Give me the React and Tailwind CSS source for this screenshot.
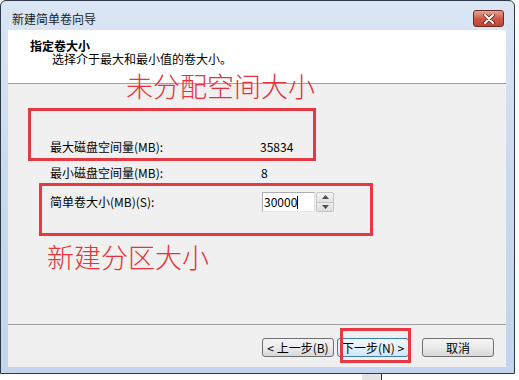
export default function App() {
  return (
    <div className="relative w-[519px] h-[380px] overflow-hidden bg-white text-[12px] text-black font-['Noto_Sans_CJK_SC','Noto_Sans',sans-serif]">
      {/* window */}
      <div className="w-[515px] h-[374px] flex flex-col rounded-t-[6px] border border-[#2e3a4a] bg-gradient-to-b from-[#dbe6f4] via-[#c9d9ee] to-[#c2d5ec] pl-[7px] pr-[8px] pb-[6px]">
        {/* title bar */}
        <div className="h-[29px] flex items-start">
          <span className="mt-[11px] ml-[4px] leading-[14px] text-[#1b1b1b]">新建简单卷向导</span>
          <button className="ml-auto mt-[9px] mr-[2px] w-[31px] h-[17px] flex items-center justify-center rounded-[3px] border border-[#6e2a22] bg-gradient-to-b from-[#e6a496] via-[#cf5a47] to-[#bd4533]">
            <svg width="12" height="10" viewBox="0 0 12 10">
              <path d="M2 1 L10 9 M10 1 L2 9" stroke="#5a1d14" strokeWidth="3.4" strokeLinecap="round" />
              <path d="M2 1 L10 9 M10 1 L2 9" stroke="#ffffff" strokeWidth="2" strokeLinecap="round" />
            </svg>
          </button>
        </div>

        {/* content */}
        <div className="flex-1 flex flex-col bg-[#f0f0f0]">
          <div className="h-[53px] bg-white pt-[9px] pl-[22px] leading-[13px]">
            <div className="font-bold">指定卷大小</div>
            <div className="pl-[22px]">选择介于最大和最小值的卷大小。</div>
          </div>
          <div className="h-px bg-[#a0a0a0]" />

          <div className="h-[240px] flex flex-col pl-[42px] pt-[53px]">
            <div className="h-[20px] flex items-center">
              <span className="w-[210px]">最大磁盘空间量(MB):</span>
              <span>35834</span>
            </div>
            <div className="h-[20px] mt-[6px] flex items-center">
              <span className="w-[210px]">最小磁盘空间量(MB):</span>
              <span className="ml-[1px]">8</span>
            </div>
            <div className="h-[20px] mt-[9px] flex items-center">
              <span className="w-[212px]">简单卷大小(MB)(S):</span>
              <div className="w-[53px] h-[20px] flex items-center border border-[#abadb3] border-b-[#e3e9ef] border-r-[#dbdfe6] bg-white pl-[1px]">
                <span>30000</span>
                <span className="w-px h-[13px] bg-black" />
              </div>
              <div className="w-[18px] h-[20px] flex flex-col ml-[1px]">
                <div className="flex-1 flex items-center justify-center rounded-t-[2px] border border-[#c5c5c5] bg-gradient-to-b from-[#f5f5f5] to-[#e3e3e3]">
                  <svg width="7" height="4" viewBox="0 0 7 4"><path d="M3.5 0 L7 4 L0 4 Z" fill="#4d4d4d" /></svg>
                </div>
                <div className="flex-1 flex items-center justify-center rounded-b-[2px] border border-t-0 border-[#c5c5c5] bg-gradient-to-b from-[#eeeeee] to-[#dcdcdc]">
                  <svg width="7" height="4" viewBox="0 0 7 4"><path d="M0 0 L7 0 L3.5 4 Z" fill="#4d4d4d" /></svg>
                </div>
              </div>
            </div>
          </div>

          <div className="h-px bg-[#a0a0a0]" />

          {/* buttons */}
          <div className="flex-1 flex justify-end items-start pt-[13px] pr-[12px]">
            <button className="w-[72px] h-[19px] flex items-center justify-center rounded-[3px] border border-[#707070] bg-gradient-to-b from-[#f4f4f4] via-[#ebebeb] to-[#d8d8d8] leading-none">
              &lt; 上一步(B)
            </button>
            <button className="ml-[3px] w-[72px] h-[19px] flex items-center justify-center rounded-[3px] border border-[#3c7fb1] bg-gradient-to-b from-[#eef7fd] via-[#e3f1fb] to-[#cfe7f7] leading-none">
              下一步(N) &gt;
            </button>
            <button className="ml-[13px] w-[72px] h-[19px] flex items-center justify-center rounded-[3px] border border-[#707070] bg-gradient-to-b from-[#f4f4f4] via-[#ebebeb] to-[#d8d8d8] leading-none">
              取消
            </button>
          </div>
        </div>
      </div>

      {/* what lies behind the window */}
      <div className="h-[6px] flex">
        <div className="ml-[362px] w-[20px] h-full bg-[#e4e4e4] border-r border-[#333333]" />
      </div>

      {/* red annotations drawn over the screenshot */}
      <div className="absolute left-[126px] top-[72px] text-[27px] leading-[27px] font-light text-[#e6333b] whitespace-nowrap">未分配空间大小</div>
      <div className="absolute left-[28px] top-[108px] w-[288px] h-[53px] border-[3px] border-[#e63a42]" />
      <div className="absolute left-[39px] top-[183px] w-[334px] h-[53px] border-[3px] border-[#e63a42]" />
      <div className="absolute left-[47px] top-[243px] text-[27px] leading-[27px] font-light text-[#e6333b] whitespace-nowrap">新建分区大小</div>
      <div className="absolute left-[340px] top-[328px] w-[71px] h-[35px] border-[3px] border-[#e63a42]" />
    </div>
  );
}
